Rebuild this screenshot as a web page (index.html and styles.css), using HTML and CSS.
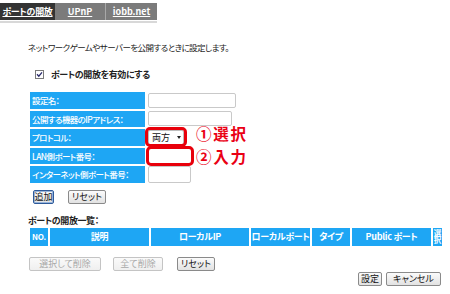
FILE: index.html
```html
<!DOCTYPE html>
<html lang="ja">
<head>
<meta charset="utf-8">
<link rel="stylesheet" href="styles.css">
</head>
<body>
<div class="page">
  <div class="tabs">
    <a class="tab active">ポートの開放</a>
    <a class="tab">UPnP</a>
    <a class="tab last">iobb.net</a>
  </div>
  <div class="tabline"></div>

  <p class="intro">ネットワークゲームやサーバーを公開するときに設定します。</p>

  <label class="enable"><span class="check"><svg width="9" height="9" viewBox="0 0 9 9"><rect x="0.5" y="0.5" width="8" height="8" fill="#fff" stroke="#7a7a7a"/><path d="M2 4.3 L3.8 6.2 L7 2.4" fill="none" stroke="#2a2a6a" stroke-width="1.3"/></svg></span>ポートの開放を有効にする</label>

  <div class="form">
    <div class="lbl">設定名：</div>
    <div class="val wide"><span class="inp w88"></span></div>
    <div class="lbl">公開する機器のIPアドレス：</div>
    <div class="val wide"><span class="inp w84"></span></div>
    <div class="lbl">プロトコル：</div>
    <div class="val">
      <span class="mark mark-sel"><span class="select">両方<span class="arrow"></span></span></span>
    </div>
    <div class="note">①選択<br>②入力</div>
    <div class="lbl">LAN側ポート番号：</div>
    <div class="val">
      <span class="mark mark-inp"><span class="inp w43"></span></span>
    </div>
    <div class="lbl">インターネット側ポート番号：</div>
    <div class="val wide"><span class="inp w43 tall"></span></div>
  </div>

  <div class="actions">
    <button class="btn focus">追加</button>
    <button class="btn">リセット</button>
  </div>

  <p class="listtitle">ポートの開放一覧：</p>
  <div class="thead">
    <div class="th c-no">NO.</div>
    <div class="th c-desc">説明</div>
    <div class="th c-ip">ローカルIP</div>
    <div class="th c-lp">ローカルポート</div>
    <div class="th c-type">タイプ</div>
    <div class="th c-pub">Public ポート</div>
    <div class="th c-sel">選択</div>
  </div>

  <div class="listbtns">
    <button class="btn dis b-seldel">選択して削除</button>
    <button class="btn dis b-alldel">全て削除</button>
    <button class="btn b-reset">リセット</button>
  </div>

  <div class="footer">
    <button class="btn b-set">設定</button>
    <button class="btn b-cancel">キャンセル</button>
  </div>
</div>
</body>
</html>
```

FILE: styles.css
```css
* { box-sizing: border-box; }
html, body { margin: 0; padding: 0; background: #fff; }
body {
  font-family: "Noto Sans CJK JP", "Liberation Sans", sans-serif;
  font-size: 9px;
  color: #222;
  font-feature-settings: "palt";
  width: 450px;
  height: 294px;
  overflow: hidden;
}
.page { position: relative; }

.tabs {
  display: flex;
  margin-top: 3px;
  width: 157px;
  height: 17px;
  background: #7b7b7b;
}
.tab {
  display: flex;
  align-items: center;
  justify-content: center;
  color: #fff;
  font-weight: bold;
  text-decoration: underline;
  font-size: 9px;
  height: 17px;
  border-right: 1px solid #a8a8a8;
}
.tab.active { background: #333; width: 55px; border-right: none; letter-spacing: -0.3px; }
.tab:nth-child(2) { width: 51px; }
.tab.last { width: 51px; border-right: none; }
.tabline { width: 157px; height: 2px; background: #d8d8d8; margin-top: 1px; }

.intro {
  margin: 18px 0 0 28px;
  height: 12px;
  line-height: 12px;
  font-size: 8.5px;
  letter-spacing: -0.55px;
}

.enable {
  display: flex;
  align-items: center;
  margin: 15px 0 0 35px;
  height: 12px;
  font-weight: bold;
  letter-spacing: -0.4px;
}
.check { display: flex; width: 9px; height: 9px; margin-right: 7px; }

.form {
  display: grid;
  grid-template-columns: 115px 51px 130px;
  grid-auto-rows: 16.5px;
  row-gap: 2px;
  margin: 12px 0 0 30px;
}
.lbl {
  grid-column: 1;
  background: #1ea6f4;
  color: #fff;
  padding-left: 2px;
  display: flex;
  align-items: center;
  font-size: 8.5px;
  letter-spacing: -0.6px;
  font-weight: 500;
}
.val {
  grid-column: 2;
  display: flex;
  align-items: center;
  padding-left: 3px;
  position: relative;
}
.val.wide { grid-column: 2 / 4; }
.inp {
  display: block;
  height: 15px;
  background: #fff;
  border: 1px solid #c9c9c9;
  border-radius: 2px;
}
.inp.tall { height: 17px; margin-top: 1px; }
.w88 { width: 88px; }
.w84 { width: 84px; }
.w43 { width: 43px; }

.mark { position: relative; display: flex; }
.mark::after {
  content: "";
  position: absolute;
  border: 3px solid #e8000b;
  border-radius: 5px;
}
.mark-sel::after { left: -3px; top: -3px; right: -3px; bottom: -2px; }
.mark-inp::after { left: -2px; top: -2px; right: -2px; bottom: -2px; }
.mark-inp .inp { border-color: transparent; height: 16px; width: 44px; }

.select {
  display: flex;
  align-items: center;
  width: 36px;
  height: 15px;
  border: 1px solid #bdbdbd;
  border-radius: 2px;
  background: #fff;
  padding-left: 3px;
  color: #111;
}
.arrow {
  margin-left: 7px;
  width: 0; height: 0;
  border-left: 2.5px solid transparent;
  border-right: 2.5px solid transparent;
  border-top: 3px solid #222;
}
.note {
  grid-column: 3;
  grid-row: 3 / 5;
  align-self: center;
  margin-top: -4px;
  color: #ea0014;
  font-weight: bold;
  font-size: 15.5px;
  line-height: 22.5px;
  letter-spacing: 1.8px;
  white-space: nowrap;
}

.actions {
  display: flex;
  gap: 14px;
  margin: 7.5px 0 0 33px;
}
.btn {
  font-family: inherit;
  font-feature-settings: "palt";
  font-size: 9px;
  height: 14px;
  padding: 0 4px;
  line-height: 12px;
  background: linear-gradient(#fbfbfb, #e2e2e2);
  border: 1px solid #8a8a8a;
  border-radius: 2px;
  color: #111;
  margin: 0;
}
.btn.focus { border: 1px solid #2e5a9a; box-shadow: inset 0 0 0 1px #99b5da; width: 21px; padding: 0; }
.actions .btn:nth-child(2) { width: 38px; padding: 0; }
.btn.dis { color: #a8a8a8; border-color: #c4c4c4; background: linear-gradient(#fafafa, #efefef); }

.listtitle {
  margin: 10.5px 0 0 28px;
  font-weight: bold;
  height: 12px;
  line-height: 12px;
  letter-spacing: -0.4px;
}
.thead {
  display: flex;
  margin: 1px 0 0 30px;
  height: 18px;
  gap: 2px;
}
.th {
  background: #1ea6f4;
  color: #fff;
  font-weight: bold;
  display: flex;
  align-items: center;
  justify-content: center;
  letter-spacing: -0.3px;
}
.c-no { width: 18px; font-size: 8px; }
.c-desc { width: 99px; }
.c-ip { width: 98px; }
.c-lp { width: 59px; }
.c-type { width: 38px; }
.c-pub { width: 79px; }
.c-sel {
  width: 9px;
  font-size: 7.5px;
  line-height: 9px;
  writing-mode: vertical-rl;
  letter-spacing: 0;
  overflow: hidden;
}

.listbtns {
  display: flex;
  margin: 11px 0 0 29px;
  height: 14px;
}
.b-seldel { width: 72px; }
.b-alldel { width: 50px; margin-left: 12px; }
.b-reset { width: 38px; margin-left: 14px; padding: 0; }

.footer {
  display: flex;
  justify-content: flex-end;
  gap: 4px;
  margin: 1px 9px 0 0;
}
.b-set { width: 24px; padding: 0; }
.b-cancel { width: 55px; }
```
